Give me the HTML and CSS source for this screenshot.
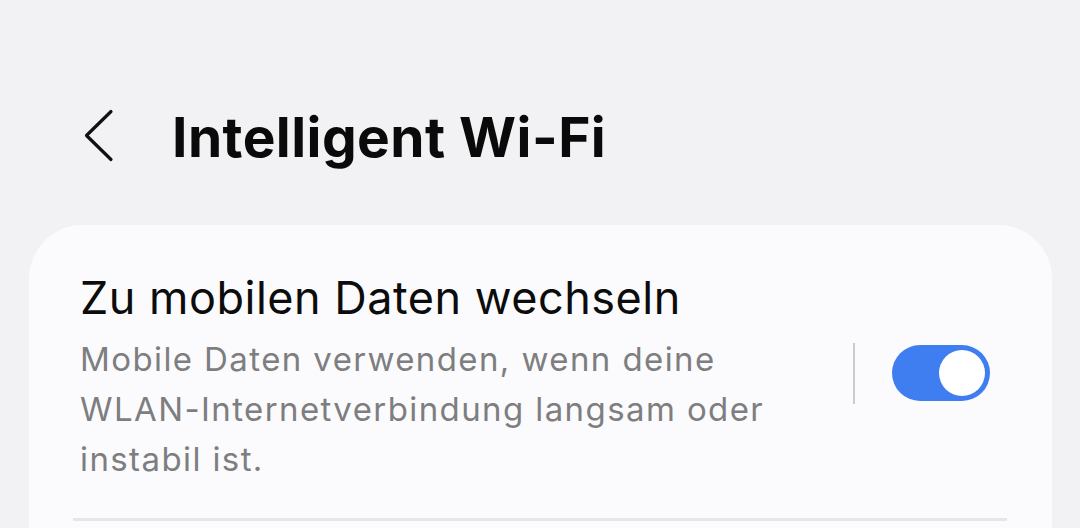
FILE: index.html
```html
<!DOCTYPE html>
<html lang="de">
<head>
<meta charset="utf-8">
<title>Intelligent Wi-Fi</title>
<link rel="stylesheet" href="styles.css">
</head>
<body>
<div class="screen">
  <header class="header">
    <button class="back" aria-label="Zurück">
      <svg width="30" height="53" viewBox="0 0 30 53"><polyline points="27,2.5 2.5,26.5 27,50.5" fill="none" stroke="#111" stroke-width="3.2" stroke-linecap="round" stroke-linejoin="round"/></svg>
    </button>
    <h1 class="title">Intelligent Wi-Fi</h1>
  </header>
  <section class="card">
    <div class="row">
      <div class="text">
        <div class="row-title">Zu mobilen Daten wechseln</div>
        <div class="row-sub">Mobile Daten verwenden, wenn deine WLAN-Internetverbindung langsam oder instabil ist.</div>
      </div>
      <div class="control">
        <span class="sep"></span>
        <span class="switch on"><span class="knob"></span></span>
      </div>
    </div>
    <div class="divider"></div>
  </section>
</div>
</body>
</html>
```
FILE: styles.css
```css
* { box-sizing: border-box; }
html, body { margin: 0; padding: 0; }
body {
  background: #f2f2f4;
  font-family: Inter, "Noto Sans", "Liberation Sans", sans-serif;
  width: 1080px;
  height: 528px;
  overflow: hidden;
}
.screen {
  display: flex;
  flex-direction: column;
}
.header {
  display: flex;
  padding: 105px 0 0 84px;
  height: 225px;
  align-items: flex-start;
}
.back {
  border: 0;
  background: none;
  padding: 0;
  margin: 4px 58px 0 0;
  width: 30px;
  height: 53px;
  display: block;
}
.back svg { display: block; }
.title {
  margin: 0;
  font-size: 55px;
  line-height: 64px;
  font-weight: 700;
  color: #0a0a0a;
  letter-spacing: 0.45px;
}
.card {
  margin: 0 28px 0 29px;
  background: #fbfbfd;
  border-radius: 54px 54px 0 0;
  padding: 47px 45px 0 44px;
  height: 320px;
}
.row {
  display: flex;
  align-items: center;
}
.text {
  flex: 0 0 740px;
  padding-left: 7px;
}
.row-title {
  font-size: 45px;
  line-height: 52px;
  color: #0c0c0c;
  letter-spacing: 0.5px;
  margin-bottom: 10px;
}
.row-sub {
  font-size: 33px;
  line-height: 50px;
  color: #7e7e80;
  letter-spacing: 1.4px;
  padding-right: 40px;
}
.control {
  display: flex;
  align-items: center;
  margin-bottom: 10px;
}
.sep {
  width: 2px;
  height: 61px;
  background: #cbcbcd;
  margin-left: 40px;
  margin-right: 37px;
}
.switch {
  width: 98px;
  height: 56px;
  border-radius: 28px;
  background: #3f7ef0;
  padding: 5px;
  display: flex;
  justify-content: flex-end;
}
.knob {
  width: 46px;
  height: 46px;
  border-radius: 50%;
  background: #ffffff;
}
.divider {
  height: 3px;
  background: #e6e6e9;
  margin-top: 34px;
}
```
